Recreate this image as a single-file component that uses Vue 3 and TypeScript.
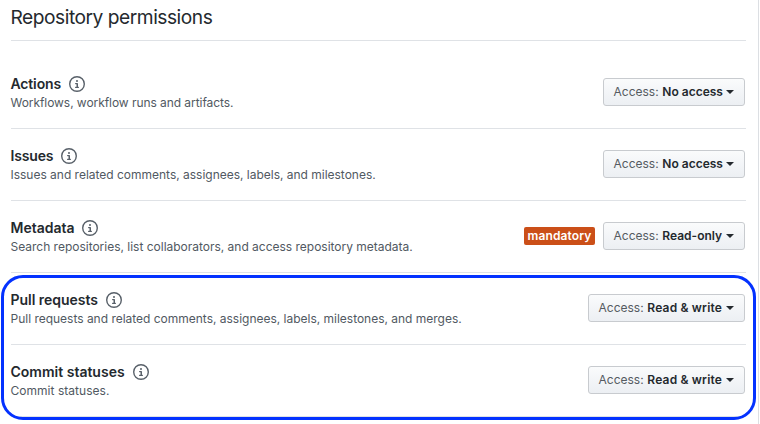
<script setup lang="ts">
interface Permission {
  id: string
  name: string
  description: string
  access: string
  mandatory?: boolean
}

const permissions: Permission[] = [
  { id: 'actions', name: 'Actions', description: 'Workflows, workflow runs and artifacts.', access: 'No access' },
  { id: 'issues', name: 'Issues', description: 'Issues and related comments, assignees, labels, and milestones.', access: 'No access' },
  { id: 'metadata', name: 'Metadata', description: 'Search repositories, list collaborators, and access repository metadata.', access: 'Read-only', mandatory: true },
  { id: 'pulls', name: 'Pull requests', description: 'Pull requests and related comments, assignees, labels, milestones, and merges.', access: 'Read & write' },
  { id: 'statuses', name: 'Commit statuses', description: 'Commit statuses.', access: 'Read & write' },
]
</script>

<template>
  <main class="panel">
    <h2 class="title">Repository permissions</h2>
    <ul class="list">
      <li v-for="p in permissions" :key="p.id" class="row" :class="p.id">
        <div class="info">
          <div class="heading">
            <strong class="name">{{ p.name }}</strong>
            <svg class="icon" viewBox="0 0 16 16" width="16" height="16" aria-hidden="true">
              <path fill-rule="evenodd" d="M8 1.4a6.6 6.6 0 100 13.2 6.6 6.6 0 000-13.2zM0 8a8 8 0 1116 0A8 8 0 010 8zm6-.4A.6.6 0 016.6 7h1.7a.7.7 0 01.7.7v3h.4a.65.65 0 010 1.3H6.6a.65.65 0 010-1.3h.9V8.2h-.9A.6.6 0 016 7.6zM8 6a1 1 0 100-2 1 1 0 000 2z" />
            </svg>
          </div>
          <p class="description">{{ p.description }}</p>
        </div>
        <span v-if="p.mandatory" class="badge">mandatory</span>
        <button type="button" class="select" :class="{ wide: p.access === 'Read & write' }">
          <span class="label">Access:</span>
          <span class="value">{{ p.access }}</span>
          <span class="caret"></span>
        </button>
      </li>
    </ul>
    <div class="highlight"></div>
  </main>
</template>

<style>
body {
  background: #fff;
  overflow: hidden;
}
</style>

<style scoped>
.panel {
  position: relative;
  box-sizing: border-box;
  width: 759px;
  height: 424px;
  padding: 0 12px 0 11px;
  border-right: 1px solid #dcdfe3;
  color: #24292e;
  font-family: Inter, "Liberation Sans", sans-serif;
  overflow: hidden;
}
.title {
  box-sizing: border-box;
  height: 41px;
  margin: 0;
  padding-top: 2px;
  border-bottom: 1px solid #dfe2e6;
  font-size: 19.2px;
  font-weight: 400;
  line-height: 30px;
  letter-spacing: -0.48px;
  text-indent: -0.5px;
}
.list {
  margin: 0;
  padding: 16px 0 0;
  list-style: none;
}
.row {
  box-sizing: border-box;
  display: flex;
  align-items: center;
  height: 72px;
  padding-right: 1px;
  border-bottom: 1px solid #dfe2e6;
}
.info {
  flex: 1;
}
.heading {
  display: flex;
  align-items: center;
  gap: 8px;
  height: 20px;
  text-indent: -0.5px;
}
.name {
  font-size: 14px;
  font-weight: 600;
  line-height: 20px;
}
.actions .name,
.issues .name {
  letter-spacing: -0.15px;
}
.metadata .name,
.pulls .name {
  letter-spacing: -0.02px;
}
.pulls .heading {
  gap: 7.5px;
}
.icon {
  flex: none;
  fill: #586069;
}
.description {
  margin: 0;
  color: #515962;
  font-size: 12px;
  line-height: 18px;
  letter-spacing: -0.012px;
  text-indent: -0.5px;
  white-space: nowrap;
}
.actions .description {
  letter-spacing: -0.06px;
}
.statuses .description {
  letter-spacing: 0.03px;
}
.badge {
  box-sizing: border-box;
  width: 71px;
  height: 18px;
  margin: 0 8px 1px 0;
  border-radius: 2px;
  background: #cb4f18;
  color: #fff;
  font-size: 12px;
  font-weight: 600;
  line-height: 18px;
  letter-spacing: 0.1px;
  text-align: center;
}
.select {
  box-sizing: border-box;
  display: flex;
  align-items: center;
  width: 142px;
  height: 28px;
  margin: 0 0 1px;
  padding: 0 10px 0 9.5px;
  border: 1px solid #c8cbcf;
  border-radius: 3px;
  background: linear-gradient(#fafbfc, #eceff3);
  color: #24292e;
  font-family: inherit;
  font-size: 12px;
  line-height: 20px;
  white-space: nowrap;
}
.select.wide {
  width: 157px;
}
.label {
  color: #555b61;
}
.value {
  margin-left: 3.7px;
  font-weight: 600;
}
.wide .value {
  letter-spacing: 0.18px;
}
.caret {
  margin-left: auto;
  border: 4px solid transparent;
  border-top-color: #24292e;
  border-bottom: 0;
}
.highlight {
  position: absolute;
  box-sizing: border-box;
  left: 1px;
  top: 275px;
  width: 755px;
  height: 145px;
  border: 3px solid #0432ff;
  border-radius: 22px;
}
</style>
